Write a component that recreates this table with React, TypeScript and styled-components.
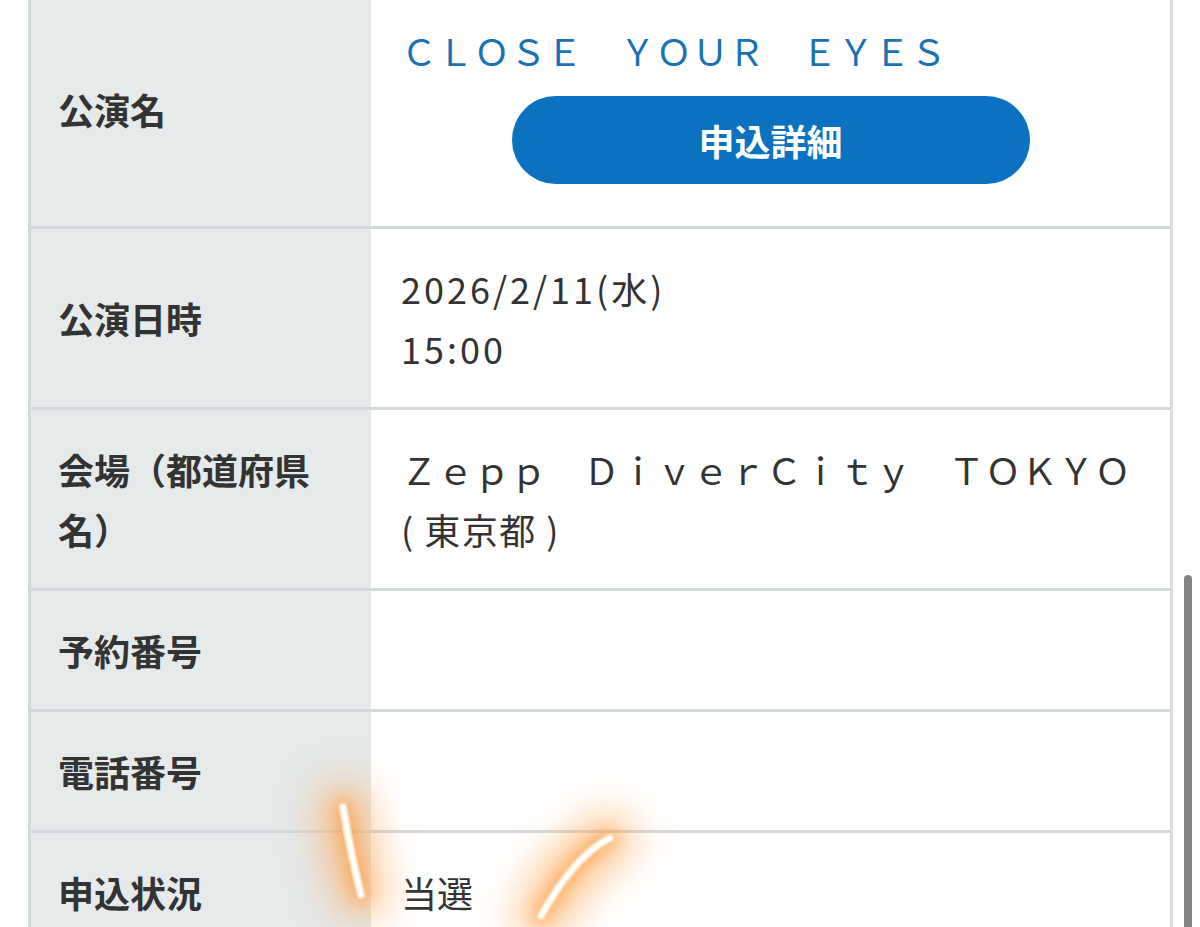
import React from "react";
import styled, { createGlobalStyle } from "styled-components";

const GlobalStyle = createGlobalStyle`
  html, body {
    margin: 0;
    padding: 0;
    background: #fff;
    overflow: hidden;
  }
  body {
    font-family: "Noto Sans CJK JP", "Noto Sans", sans-serif;
    color: #333;
  }
`;

const Page = styled.div`
  position: relative;
  height: 927px;
  overflow: hidden;
`;

const Table = styled.div`
  margin: -9px 27px 0 28px;
  border-left: 3px solid #d3dadb;
  border-right: 3px solid #d8dddd;
`;

const Row = styled.div`
  display: grid;
  grid-template-columns: 340px 1fr;
  border-bottom: 3px solid #d3dadb;
`;

const Label = styled.div`
  background: #e6eaeb;
  padding: 29px 27px;
  display: flex;
  align-items: center;
  font-size: 36px;
  line-height: 60px;
  font-weight: 700;
  color: #333;
`;

const Value = styled.div<{ $tall?: boolean }>`
  padding: ${(p) => (p.$tall ? "29px 30px 42px" : "29px 30px")};
  font-size: 36px;
  line-height: 60px;
  min-height: 60px;
  color: #333;
`;

// digits in the original are set wider than Noto's
const Spaced = styled.span<{ $gap: number }>`
  letter-spacing: ${(p) => p.$gap}px;
`;

const Title = styled.div`
  color: #1a72b6;
  font-size: 36px;
  line-height: 60px;
  letter-spacing: 0.4px;
`;

const DetailButton = styled.button`
  display: block;
  width: 518px;
  height: 88px;
  margin: 16px auto 0;
  border: none;
  border-radius: 44px;
  background: #0a72c0;
  color: #fff;
  font-family: inherit;
  font-size: 36px;
  font-weight: 700;
  cursor: pointer;
`;

const Scrollbar = styled.div`
  position: absolute;
  right: 8px;
  top: 575px;
  bottom: -10px;
  width: 8px;
  border-radius: 4px;
  background: #848484;
`;

const Marks = styled.svg`
  position: absolute;
  left: 0;
  top: 0;
  width: 1200px;
  height: 927px;
  pointer-events: none;
`;

const rows: { label: string; value: React.ReactNode }[] = [
  {
    label: "公演日時",
    value: (
      <Spaced $gap={3}>
        2026/2/11(水)
        <br />
        15:00
      </Spaced>
    ),
  },
  {
    label: "会場（都道府県名）",
    value: (
      <>
        <Spaced $gap={0.5}>Ｚｅｐｐ　ＤｉｖｅｒＣｉｔｙ　ＴＯＫＹＯ</Spaced>
        <br />
        <Spaced $gap={1.5}>( 東京都 )</Spaced>
      </>
    ),
  },
  { label: "予約番号", value: "" },
  { label: "電話番号", value: "" },
  { label: "申込状況", value: "当選" },
];

const strokes = ["M343 807 Q350 850 361 895", "M610 838 Q575 855 541 916"];

export default function App() {
  return (
    <Page>
      <GlobalStyle />
      <Table>
        <Row>
          <Label>公演名</Label>
          <Value $tall>
            <Title>ＣＬＯＳＥ　ＹＯＵＲ　ＥＹＥＳ</Title>
            <DetailButton>申込詳細</DetailButton>
          </Value>
        </Row>
        {rows.map((r) => (
          <Row key={r.label}>
            <Label>{r.label}</Label>
            <Value>{r.value}</Value>
          </Row>
        ))}
      </Table>
      <Scrollbar />
      <Marks viewBox="0 0 1200 927">
        <defs>
          <filter id="haze" filterUnits="userSpaceOnUse" x="0" y="0" width="1200" height="927">
            <feGaussianBlur stdDeviation="20" />
          </filter>
          <filter id="glow" filterUnits="userSpaceOnUse" x="0" y="0" width="1200" height="927">
            <feGaussianBlur stdDeviation="8" />
          </filter>
        </defs>
        <g fill="none" strokeLinecap="round">
          {strokes.map((d) => (
            <path key={d + "h"} d={d} stroke="#ffa24a" strokeWidth="50" opacity="0.6" filter="url(#haze)" />
          ))}
          {strokes.map((d) => (
            <path key={d + "g"} d={d} stroke="#ff9c45" strokeWidth="16" opacity="0.65" filter="url(#glow)" />
          ))}
          {strokes.map((d) => (
            <path key={d + "m"} d={d} stroke="#ffdcb8" strokeWidth="9" />
          ))}
          {strokes.map((d) => (
            <path key={d + "c"} d={d} stroke="#fff" strokeWidth="5" />
          ))}
        </g>
      </Marks>
    </Page>
  );
}
